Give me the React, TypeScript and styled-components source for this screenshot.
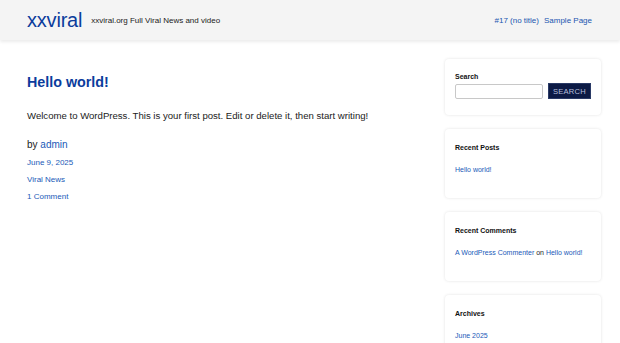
import React from "react";
import styled, { createGlobalStyle } from "styled-components";

const GlobalStyle = createGlobalStyle`
  html, body {
    margin: 0;
    padding: 0;
    background: #fff;
    font-family: "Liberation Sans", Arial, sans-serif;
    color: #222;
  }
  a {
    text-decoration: none;
  }
`;

const Header = styled.header`
  height: 40px;
  background: #f4f4f4;
  box-shadow: 0 2px 3px rgba(0, 0, 0, 0.08);
  display: flex;
  align-items: center;
  padding: 0 28px 0 27px;
`;

const Brand = styled.a`
  font-size: 20px;
  color: #0b3c9c;
  letter-spacing: -0.2px;
`;

const Tagline = styled.span`
  font-size: 8px;
  color: #222;
  margin-left: 9px;
  margin-top: 1px;
`;

const Nav = styled.nav`
  margin-left: auto;
  display: flex;
  gap: 5px;
`;

const NavLink = styled.a`
  font-size: 8px;
  color: #1a56b0;
`;

const Main = styled.div`
  display: flex;
  padding: 0 19px 0 27px;
`;

const Content = styled.main`
  flex: 1;
  padding-top: 32px;
`;

const PostTitle = styled.h1`
  margin: 0;
  font-size: 14.3px;
  line-height: 20px;
  font-weight: 700;
  color: #0b3c9c;
`;

const PostBody = styled.p`
  margin: 17px 0 0;
  font-size: 9.6px;
  line-height: 14px;
  color: #222;
`;

const Byline = styled.div`
  margin-top: 15px;
  font-size: 10px;
  line-height: 14px;
  color: #222;
`;

const BlueLink = styled.a<{ $size?: number }>`
  color: #1a5ab8;
  font-size: ${(p) => p.$size ?? 8}px;
`;

const Meta = styled.div`
  margin-top: 4px;
  font-size: 8px;
  line-height: 13px;
  & + & {
    margin-top: 4px;
  }
`;

const Sidebar = styled.aside`
  width: 156px;
  margin-top: 19px;
  display: flex;
  flex-direction: column;
  gap: 14px;
`;

const Card = styled.section<{ $tight?: boolean }>`
  background: #fff;
  border-radius: 4px;
  box-shadow: 0 0 3px rgba(0, 0, 0, 0.12);
  padding: ${(p) => (p.$tight ? "14px 10px 16px" : "15px 10px 24px")};
`;

const WidgetTitle = styled.h2<{ $tight?: boolean }>`
  margin: 0 0 ${(p) => (p.$tight ? 2 : 14)}px;
  font-size: 7px;
  line-height: 8px;
  font-weight: 700;
  color: #111;
`;

const SearchRow = styled.form`
  display: flex;
  align-items: center;
  gap: 5px;
`;

const SearchInput = styled.input`
  width: 88px;
  height: 15px;
  box-sizing: border-box;
  border: 1px solid #c8c8c8;
  border-radius: 2px;
  background: #fff;
  padding: 0 4px;
  font-size: 7px;
`;

const SearchButton = styled.button`
  height: 16px;
  padding: 0 4px;
  border: 1px solid #2a3a66;
  background: #0c1a45;
  color: #b6bfdc;
  font-family: "Liberation Sans", Arial, sans-serif;
  font-size: 7.6px;
  letter-spacing: 0.2px;
  cursor: pointer;
`;

const WidgetText = styled.div`
  font-size: 7px;
  line-height: 8px;
  color: #222;
`;

export default function App() {
  return (
    <>
      <GlobalStyle />
      <Header>
        <Brand href="#">xxviral</Brand>
        <Tagline>xxviral.org Full Viral News and video</Tagline>
        <Nav>
          <NavLink href="#">#17 (no title)</NavLink>
          <NavLink href="#">Sample Page</NavLink>
        </Nav>
      </Header>
      <Main>
        <Content>
          <PostTitle>Hello world!</PostTitle>
          <PostBody>
            Welcome to WordPress. This is your first post. Edit or delete it, then start writing!
          </PostBody>
          <Byline>
            by <BlueLink href="#" $size={10}>admin</BlueLink>
          </Byline>
          <Meta>
            <BlueLink href="#">June 9, 2025</BlueLink>
          </Meta>
          <Meta>
            <BlueLink href="#">Viral News</BlueLink>
          </Meta>
          <Meta>
            <BlueLink href="#">1 Comment</BlueLink>
          </Meta>
        </Content>
        <Sidebar>
          <Card $tight>
            <WidgetTitle $tight>Search</WidgetTitle>
            <SearchRow onSubmit={(e) => e.preventDefault()}>
              <SearchInput type="text" />
              <SearchButton type="submit">SEARCH</SearchButton>
            </SearchRow>
          </Card>
          <Card>
            <WidgetTitle>Recent Posts</WidgetTitle>
            <WidgetText>
              <BlueLink href="#" $size={7}>Hello world!</BlueLink>
            </WidgetText>
          </Card>
          <Card>
            <WidgetTitle>Recent Comments</WidgetTitle>
            <WidgetText>
              <BlueLink href="#" $size={7}>A WordPress Commenter</BlueLink> on{" "}
              <BlueLink href="#" $size={7}>Hello world!</BlueLink>
            </WidgetText>
          </Card>
          <Card>
            <WidgetTitle>Archives</WidgetTitle>
            <WidgetText>
              <BlueLink href="#" $size={7}>June 2025</BlueLink>
            </WidgetText>
          </Card>
        </Sidebar>
      </Main>
    </>
  );
}
